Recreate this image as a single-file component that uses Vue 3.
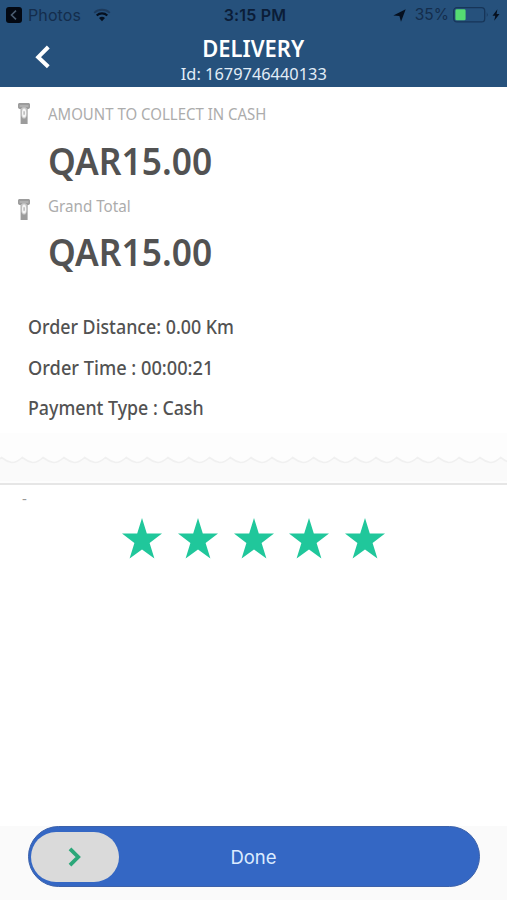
<template>
  <div class="screen">
    <header class="header">
      <div class="status-bar">
        <div class="status-left">
          <svg class="app-return" width="16" height="16" viewBox="0 0 16 16">
            <rect width="16" height="16" rx="3" fill="#030812" />
            <path d="M10 3.7 5.5 8l4.5 4.3" fill="none" stroke="#4a5c70" stroke-width="1.6" />
          </svg>
          <span class="status-photos">Photos</span>
          <svg class="wifi" width="18" height="14" viewBox="0 0 18 14">
            <path d="M1.2 4.8a11.5 11.5 0 0 1 15.6 0" fill="none" stroke="#1d3a5c" stroke-width="1.8" />
            <path d="M3.7 7.5a7.8 7.8 0 0 1 10.6 0" fill="none" stroke="#06101f" stroke-width="2.2" />
            <path d="M6 10.1a4.6 4.6 0 0 1 6 0L9 13.2z" fill="#06101f" />
          </svg>
        </div>
        <span class="status-time">3:15 PM</span>
        <div class="status-right">
          <svg class="location" width="13" height="13" viewBox="0 0 13 13">
            <path d="M12.7.3 8 12.7 6.4 7 .3 6.4z" fill="#06101f" />
          </svg>
          <span class="status-percent">35%</span>
          <svg class="battery" width="36" height="16" viewBox="0 0 36 16">
            <rect x=".7" y=".7" width="31" height="14.2" rx="3.2" fill="none" stroke="#173558" stroke-width="1.3" />
            <rect x="2.4" y="2.3" width="10.2" height="11" rx="1.4" fill="#55dc72" />
            <path d="M33.8 5.3q1.7 2.4 0 4.8z" fill="#173558" />
          </svg>
          <svg class="bolt" width="8" height="12" viewBox="0 0 8 12">
            <path d="M5.4.3.5 6.8h2.8L2.2 11.8l5.3-6.9H4.6z" fill="#06101f" />
          </svg>
        </div>
      </div>
      <div class="nav-bar">
        <button class="back" type="button" aria-label="Back">
          <svg width="16" height="24" viewBox="0 0 16 24">
            <path d="M13.3 2 3.2 12.2l10.1 9.6" fill="none" stroke="#fff" stroke-width="4" />
          </svg>
        </button>
        <div class="title-group">
          <h1 class="title">DELIVERY</h1>
          <span class="order-id">Id: 1679746440133</span>
        </div>
      </div>
    </header>

    <section class="amounts">
      <div v-for="item in amounts" :key="item.label" class="amount-row">
        <svg class="cash-icon" width="12" height="22" viewBox="0 0 12 22">
          <path d="M1.2 0h9.6q1.2.2 1.2 1.6v3q-.3 1.4-1.6 1.4H9.6v15H2.6V6h-1Q.3 6 0 4.6v-3Q0 .2 1.2 0z" fill="#9c9c9c" />
          <path d="M1.6 3h8.8" fill="none" stroke="#c6c6c6" stroke-width="1" />
          <path d="M3.3 5q1.1 0 1.2-.8h3q.2.8 1.3.8v7.6q-.5 2-1.5 3H4.9q-1.2-1-1.6-3z" fill="#c9c9c9" />
          <ellipse cx="6.1" cy="10" rx="2.1" ry="4.6" fill="#f5f5f5" />
          <path d="M6.1 8.2v3.6" fill="none" stroke="#b0b0b0" stroke-width="1.3" />
        </svg>
        <div class="amount-text">
          <span class="amount-label" :class="item.variant">{{ item.label }}</span>
          <span class="amount-value">{{ item.value }}</span>
        </div>
      </div>
    </section>

    <section class="details">
      <p v-for="line in details" :key="line.text" class="detail" :class="line.variant">{{ line.text }}</p>
    </section>

    <!-- Receipt edge -->
    <div class="receipt-edge">
      <svg width="507" height="48" viewBox="0 0 507 48">
        <path :d="edgeFill" fill="#fafafa" />
        <path :d="edgeLine" fill="none" stroke="#f0f0f0" stroke-width="1.6" />
      </svg>
    </div>

    <section class="rating">
      <span class="customer">-</span>
      <div class="stars">
        <svg v-for="n in 5" :key="n" width="40" height="41" viewBox="0 0 40 41">
          <path d="M20 0l4.8 15.6H40L27.6 25l4.8 15.6L20 31.4 7.6 40.6 12.4 25 0 15.6h15.2z" fill="#20c79b" />
        </svg>
      </div>
    </section>

    <footer class="footer">
      <button class="done" type="button">
        <span class="knob">
          <svg width="14" height="20" viewBox="0 0 14 20">
            <path d="M2 1.8 10.2 10 2 18.2" fill="none" stroke="#2ba779" stroke-width="3.8" />
          </svg>
        </span>
        <span class="done-label">Done</span>
      </button>
    </footer>
  </div>
</template>

<script setup>
const amounts = [
  { label: 'AMOUNT TO COLLECT IN CASH', value: 'QAR15.00', variant: 'label-cash' },
  { label: 'Grand Total', value: 'QAR15.00', variant: 'label-total' }
]

const details = [
  { text: 'Order Distance: 0.00 Km', variant: 'distance' },
  { text: 'Order Time : 00:00:21', variant: 'time' },
  { text: 'Payment Type : Cash', variant: 'payment' }
]

// one tooth is 20.8px wide, the first crest sits just past the left edge
const tooth = 20.8
let edgeLine = 'M-9 29.5'
for (let i = 0; i < 26; i++) {
  edgeLine += ` q${tooth / 4} 0 ${tooth / 2} -5 q${tooth / 4} 4 ${tooth / 2} 5`
}
const edgeFill = `${edgeLine} V48 H-9z`
</script>

<style>
body {
  margin: 0;
  background: #fff;
}
</style>

<style scoped>
.screen {
  display: flex;
  flex-direction: column;
  width: 507px;
  height: 900px;
  overflow: hidden;
  background: #fff;
  font-family: "Noto Sans", "Open Sans", sans-serif;
  color: #525252;
}

button {
  padding: 0;
  border: 0;
  background: none;
  font: inherit;
}

.header {
  flex: none;
  height: 87px;
  background: #26517c;
}

.status-bar {
  display: grid;
  grid-template-columns: 1fr auto 1fr;
  align-items: center;
  height: 30px;
  padding: 0 6px;
  font-family: Inter, "Liberation Sans", sans-serif;
  font-size: 16px;
  line-height: 30px;
  color: #142d4c;
}

.status-left,
.status-right {
  display: flex;
  align-items: center;
}

.status-right {
  justify-content: flex-end;
}

.status-photos {
  margin-left: 6px;
  letter-spacing: 0.1px;
}

.wifi {
  margin-left: 12px;
}

.status-time {
  padding-left: 3px;
  font-weight: 600;
  letter-spacing: 0.2px;
  color: #0b1d38;
}

.status-percent {
  margin: 0 4px 0 9px;
  font-size: 15.5px;
}

.bolt {
  margin-left: 3px;
  margin-right: 1px;
}

.nav-bar {
  display: grid;
  grid-template-columns: 80px 1fr 80px;
  height: 57px;
}

.back {
  display: flex;
  align-items: center;
  height: 54px;
  padding-left: 35px;
}

.title-group {
  display: flex;
  flex-direction: column;
  align-items: center;
  padding-top: 6px;
  color: #fff;
}

.title {
  margin: 0;
  font-size: 22.5px;
  font-weight: 600;
  line-height: 26px;
  transform: scaleX(0.975);
}

.order-id {
  font-size: 17px;
  line-height: 23px;
  white-space: nowrap;
  color: #e2edf7;
  transform: scaleX(0.963);
}

.amounts {
  flex: none;
  height: 211px;
}

.amount-row {
  display: flex;
  height: 91.5px;
  padding-left: 18px;
}

.cash-icon {
  flex: none;
  margin-top: 16px;
}

.amount-row + .amount-row .cash-icon {
  margin-top: 20px;
}

.amount-text {
  display: flex;
  flex-direction: column;
  align-items: flex-start;
  padding: 15px 0 0 18px;
}

.amount-label {
  font-size: 16.8px;
  line-height: 24px;
  white-space: nowrap;
  color: #acacac;
  transform-origin: left;
}

.label-cash {
  transform: scaleX(0.893);
}

.label-total {
  transform: scaleX(0.905);
}

.amount-value {
  margin-top: 6px;
  font-size: 38px;
  font-weight: 600;
  line-height: 56px;
  transform: scaleX(0.93);
  transform-origin: left;
}

.amount-row + .amount-row .amount-value {
  margin-top: 5px;
}

.details {
  flex: none;
  height: 126px;
  padding: 9px 28px 0;
}

.detail {
  width: max-content;
  margin: 0;
  font-size: 19px;
  font-weight: 500;
  line-height: 40.5px;
  transform-origin: left;
}

.distance {
  transform: scaleX(0.938);
}

.time {
  transform: scaleX(0.958);
}

.payment {
  transform: scaleX(0.936);
}

.receipt-edge {
  flex: none;
  height: 50px;
  border-bottom: 2px solid #e6e6e6;
  background: #fdfdfd;
}

.receipt-edge svg {
  display: block;
}

.rating {
  flex: 1;
}

.customer {
  display: block;
  height: 33px;
  padding-left: 22px;
  font-size: 15px;
  line-height: 26px;
  color: #999;
}

.stars {
  display: flex;
  justify-content: center;
  gap: 15.7px;
}

.footer {
  display: flex;
  justify-content: center;
  flex: none;
  height: 74px;
  background: #fafafa;
}

.done {
  display: grid;
  grid-template-columns: 90px 1fr 90px;
  align-items: center;
  width: 452px;
  height: 61px;
  padding: 0 2px;
  box-sizing: border-box;
  border: 1px solid #3d62aa;
  border-radius: 31px;
  background: #3467c4;
  color: #dcecff;
}

.knob {
  display: flex;
  align-items: center;
  justify-content: center;
  width: 88px;
  height: 50px;
  border-radius: 25px;
  background: #dadada;
}

.done-label {
  font-family: Inter, "Liberation Sans", sans-serif;
  font-size: 18.5px;
}
</style>
